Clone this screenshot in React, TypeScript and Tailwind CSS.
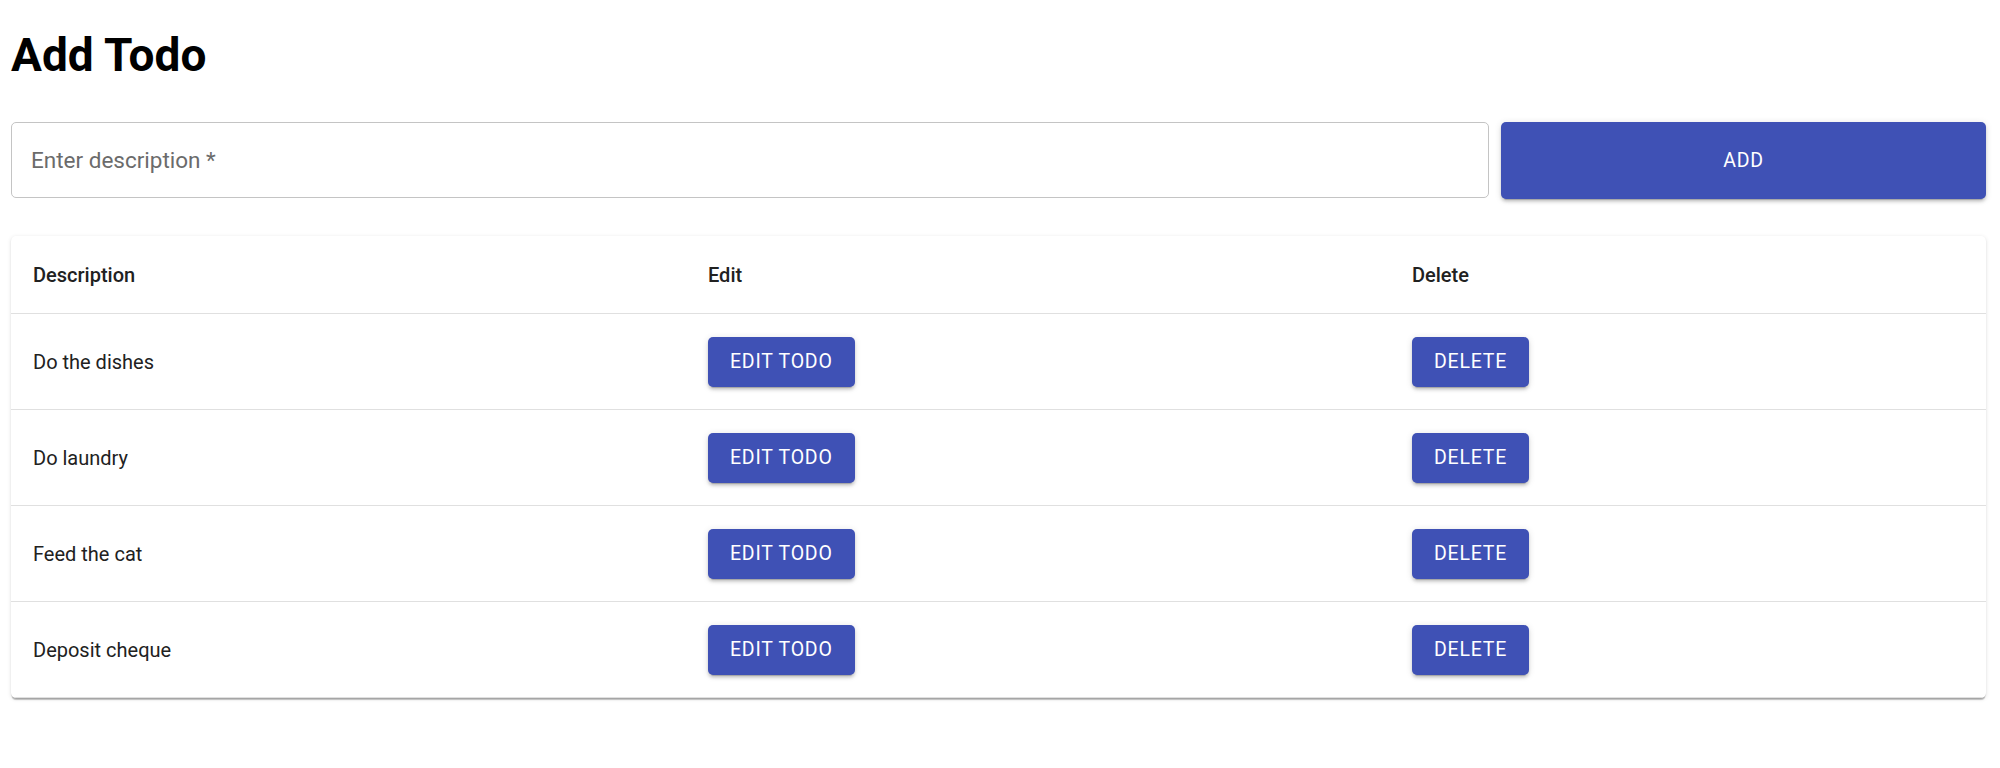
import React, { useState } from 'react';

type Todo = { id: number; description: string };

const initialTodos: Todo[] = [
  { id: 1, description: 'Do the dishes' },
  { id: 2, description: 'Do laundry' },
  { id: 3, description: 'Feed the cat' },
  { id: 4, description: 'Deposit cheque' },
];

const buttonShadow =
  'shadow-[0_4px_1px_-3px_rgba(0,0,0,0.2),0_3px_3px_0_rgba(0,0,0,0.14),0_1px_7px_0_rgba(0,0,0,0.12)]';

const App: React.FC = () => {
  const [todos, setTodos] = useState<Todo[]>(initialTodos);
  const [description, setDescription] = useState('');

  const handleAdd = () => {
    if (!description.trim()) return;
    setTodos([...todos, { id: Date.now(), description: description.trim() }]);
    setDescription('');
  };

  const handleDelete = (id: number) => {
    setTodos(todos.filter((t) => t.id !== id));
  };

  return (
    <div className="min-h-screen bg-white pl-[11px] pr-[14px] pt-[27px] font-['Roboto',sans-serif]">
      <h1 className="text-[46px] font-bold leading-[57px] text-black">Add Todo</h1>

      {/* Add form */}
      <div className="mt-[38px] flex gap-[12px]">
        <input
          value={description}
          onChange={(e) => setDescription(e.target.value)}
          placeholder="Enter description *"
          className="h-[76px] flex-1 rounded-[5px] border border-[#c4c4c4] px-[19px] text-[22.5px] text-[#212121] outline-none placeholder:text-[#6b6b6b]"
        />
        <button
          onClick={handleAdd}
          className={`h-[77px] w-[485px] rounded-[5px] bg-[#3f51b5] text-[19.5px] font-normal uppercase tracking-[0.04em] text-white ${buttonShadow}`}
        >
          Add
        </button>
      </div>

      {/* Todo table */}
      <div className="mt-[37px] overflow-hidden rounded-[5px] bg-white shadow-[0_3px_1px_-1px_rgba(0,0,0,0.2),0_1px_1px_0_rgba(0,0,0,0.14),0_1px_4px_0_rgba(0,0,0,0.12)]">
        <div className="grid h-[78px] grid-cols-[675px_704px_1fr] items-center border-b border-[#e0e0e0] text-[20px] font-medium text-[#212121]">
          <div className="px-[22px]">Description</div>
          <div className="px-[22px]">Edit</div>
          <div className="px-[22px]">Delete</div>
        </div>
        {todos.map((todo) => (
          <div
            key={todo.id}
            className="grid h-[96px] grid-cols-[675px_704px_1fr] items-center border-b border-[#e0e0e0] text-[20px] text-[#212121]"
          >
            <div className="px-[22px]">{todo.description}</div>
            <div className="px-[22px]">
              <button
                className={`h-[50px] rounded-[5px] bg-[#3f51b5] px-[22px] text-[19.5px] font-normal uppercase tracking-[0.04em] text-white ${buttonShadow}`}
              >
                Edit Todo
              </button>
            </div>
            <div className="px-[22px]">
              <button
                onClick={() => handleDelete(todo.id)}
                className={`h-[50px] rounded-[5px] bg-[#3f51b5] px-[22px] text-[19.5px] font-normal uppercase tracking-[0.04em] text-white ${buttonShadow}`}
              >
                Delete
              </button>
            </div>
          </div>
        ))}
      </div>
    </div>
  );
};

export default App;
